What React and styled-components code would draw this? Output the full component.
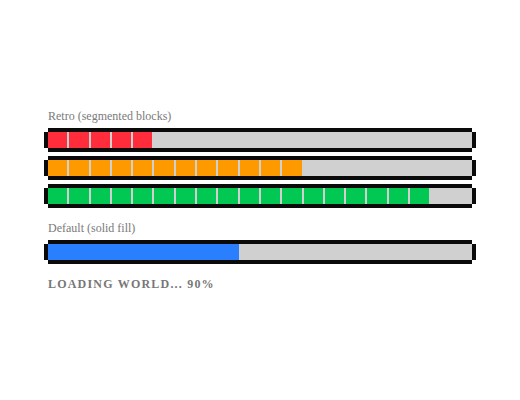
import React from "react";
import styled, { createGlobalStyle } from "styled-components";

const GlobalStyle = createGlobalStyle`
  html, body {
    margin: 0;
    padding: 0;
    background: #ffffff;
  }
  body {
    font-family: "Liberation Serif", "Times New Roman", serif;
  }
`;

const Page = styled.div`
  min-height: 100vh;
  display: flex;
  align-items: center;
  justify-content: center;
`;

const Panel = styled.div`
  width: 424px;
  display: flex;
  flex-direction: column;
  gap: 17px;
`;

const Section = styled.div`
  display: flex;
  flex-direction: column;
`;

const Label = styled.div`
  font-size: 12px;
  line-height: 14px;
  color: #7a7a7a;
  margin-bottom: 9px;
`;

const Bars = styled.div`
  display: flex;
  flex-direction: column;
  gap: 12px;
`;

// pixel border drawn with hard box-shadows so the corners stay notched
const Track = styled.div`
  height: 16px;
  background: #d0d0d0;
  box-shadow: 0 -4px 0 #0a0a0a, 0 4px 0 #0a0a0a, -4px 0 0 #0a0a0a,
    4px 0 0 #0a0a0a;
  display: flex;
  gap: 2px;
`;

const Block = styled.div`
  flex: 1;
  background: ${(p) => (p.$on ? p.$color : "transparent")};
`;

const SolidFill = styled.div`
  height: 100%;
  background: ${(p) => p.$color};
`;

const Status = styled.div`
  font-size: 12px;
  line-height: 14px;
  font-weight: bold;
  letter-spacing: 0.1em;
  color: #777777;
`;

const SEGMENTS = 20;

const RetroBar = ({ value, color }) => {
  const filled = Math.round((value / 100) * SEGMENTS);
  return (
    <Track>
      {Array.from({ length: SEGMENTS }, (_, i) => (
        <Block key={i} $on={i < filled} $color={color} />
      ))}
    </Track>
  );
};

const SolidBar = ({ value, color }) => (
  <Track>
    <SolidFill $color={color} style={{ width: `${value}%` }} />
  </Track>
);

export default function App() {
  return (
    <>
      <GlobalStyle />
      <Page>
        <Panel>
          <Section>
            <Label>Retro (segmented blocks)</Label>
            <Bars>
              <RetroBar value={25} color="#ff2d3b" />
              <RetroBar value={60} color="#ff9900" />
              <RetroBar value={90} color="#00c853" />
            </Bars>
          </Section>
          <Section>
            <Label>Default (solid fill)</Label>
            <SolidBar value={45} color="#2a7fff" />
          </Section>
          <Status>LOADING WORLD... 90%</Status>
        </Panel>
      </Page>
    </>
  );
}
